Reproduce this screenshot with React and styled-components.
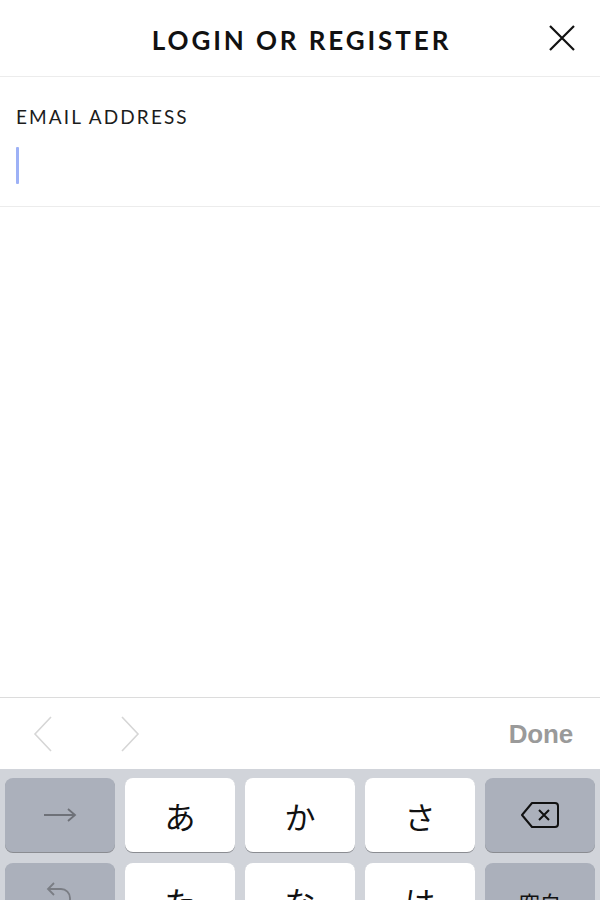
import React from "react";
import styled, { createGlobalStyle } from "styled-components";

const Global = createGlobalStyle`
  html, body { margin: 0; padding: 0; background: #fff; }
  body { width: 600px; height: 900px; overflow: hidden; }
  #root { width: 600px; height: 900px; }
  * { box-sizing: border-box; }
`;

const Screen = styled.div`
  width: 600px;
  height: 900px;
  display: flex;
  flex-direction: column;
  background: #fff;
  overflow: hidden;
`;

const Header = styled.header`
  height: 77px;
  flex: none;
  display: grid;
  grid-template-columns: 1fr auto 1fr;
  align-items: center;
  border-bottom: 1px solid #ececec;
  padding: 4px 24px 0 24px;
`;

const Title = styled.h1`
  grid-column: 2;
  margin: 0;
  font-family: Lato, "Open Sans", sans-serif;
  font-weight: 700;
  font-size: 26px;
  letter-spacing: 2.9px;
  color: #111;
  margin-right: -3px;
`;

const CloseButton = styled.button`
  grid-column: 3;
  justify-self: end;
  border: 0;
  background: none;
  padding: 0;
  width: 28px;
  height: 28px;
  display: flex;
  align-items: center;
  justify-content: center;
  cursor: pointer;
  margin-top: -4px;
`;

const Field = styled.section`
  flex: none;
  height: 130px;
  padding: 29px 16px 0 16px;
  border-bottom: 1px solid #ececec;
  display: flex;
  flex-direction: column;
`;

const Label = styled.label`
  font-family: Lato, "Open Sans", sans-serif;
  font-size: 19px;
  font-weight: 400;
  letter-spacing: 2.1px;
  color: #1c1c1c;
  line-height: 22px;
`;

const Caret = styled.span`
  display: block;
  width: 3px;
  height: 37px;
  margin-top: 19px;
  border-radius: 1px;
  background: #9db1f6;
`;

const Spacer = styled.div`
  flex: 1;
`;

const Accessory = styled.div`
  flex: none;
  height: 72px;
  border-top: 1px solid #dcdcdc;
  display: flex;
  align-items: center;
  padding: 0 27px 0 33px;
  background: #fff;
`;

const NavArrows = styled.div`
  display: flex;
  gap: 67px;
  align-items: center;
  padding-top: 1px;
`;

const DoneButton = styled.button`
  margin-left: auto;
  border: 0;
  background: none;
  padding: 0;
  font-family: "Liberation Sans", Arial, sans-serif;
  font-weight: 700;
  font-size: 26px;
  color: #9a9a9a;
  letter-spacing: -0.2px;
  margin-top: 2px;
`;

const Keyboard = styled.div`
  flex: none;
  height: 131px;
  background: #d1d4da;
  padding: 9px 5px 0 5px;
  display: grid;
  grid-template-columns: repeat(5, 110px);
  grid-auto-rows: 74px;
  column-gap: 10px;
  row-gap: 11px;
`;

const Key = styled.div`
  border-radius: 8px;
  background: ${(p) => (p.$special ? "#abb0bb" : "#ffffff")};
  box-shadow: 0 1px 0 #8a8c91;
  display: flex;
  align-items: center;
  justify-content: center;
  font-family: "Noto Sans CJK JP", "Noto Sans", sans-serif;
  font-size: ${(p) => (p.$small ? "21px" : "31px")};
  color: #111;
  line-height: 1;
  padding-top: ${(p) => (p.$small ? "4px" : "0")};
`;

const Chevron = ({ dir }) => (
  <svg width="20" height="36" viewBox="0 0 20 36" fill="none">
    <path
      d={dir === "left" ? "M18 1 L2 18 L18 35" : "M2 1 L18 18 L2 35"}
      stroke="#d6d6d6"
      strokeWidth="1.6"
    />
  </svg>
);

export default function App() {
  return (
    <>
      <Global />
      <Screen>
        <Header>
          <Title>LOGIN OR REGISTER</Title>
          <CloseButton aria-label="Close">
            <svg width="26" height="26" viewBox="0 0 26 26">
              <path d="M1 1 L25 25 M25 1 L1 25" stroke="#111" strokeWidth="2.2" />
            </svg>
          </CloseButton>
        </Header>
        <Field>
          <Label>EMAIL ADDRESS</Label>
          <Caret />
        </Field>
        <Spacer />
        <Accessory>
          <NavArrows>
            <Chevron dir="left" />
            <Chevron dir="right" />
          </NavArrows>
          <DoneButton>Done</DoneButton>
        </Accessory>
        <Keyboard>
          <Key $special>
            <svg width="34" height="14" viewBox="0 0 34 14" fill="none">
              <path d="M1 7 H32 M25 1 L32 7 L25 13" stroke="#6e7178" strokeWidth="1.8" />
            </svg>
          </Key>
          <Key>あ</Key>
          <Key>か</Key>
          <Key>さ</Key>
          <Key $special>
            <svg width="40" height="28" viewBox="0 0 40 28" fill="none">
              <path
                d="M12 2 H35 a3 3 0 0 1 3 3 V23 a3 3 0 0 1 -3 3 H12 L2 14 Z"
                stroke="#111"
                strokeWidth="2"
                strokeLinejoin="round"
              />
              <path d="M19 9 L29 19 M29 9 L19 19" stroke="#111" strokeWidth="2" />
            </svg>
          </Key>
          <Key $special>
            <svg width="30" height="40" viewBox="0 0 30 40" fill="none">
              <path d="M9 3 L3 9 L9 15 M3 9 H16 a9 9 0 0 1 9 9 V28" stroke="#7a7d84" strokeWidth="1.8" />
            </svg>
          </Key>
          <Key>た</Key>
          <Key>な</Key>
          <Key>は</Key>
          <Key $special $small>空白</Key>
        </Keyboard>
      </Screen>
    </>
  );
}
